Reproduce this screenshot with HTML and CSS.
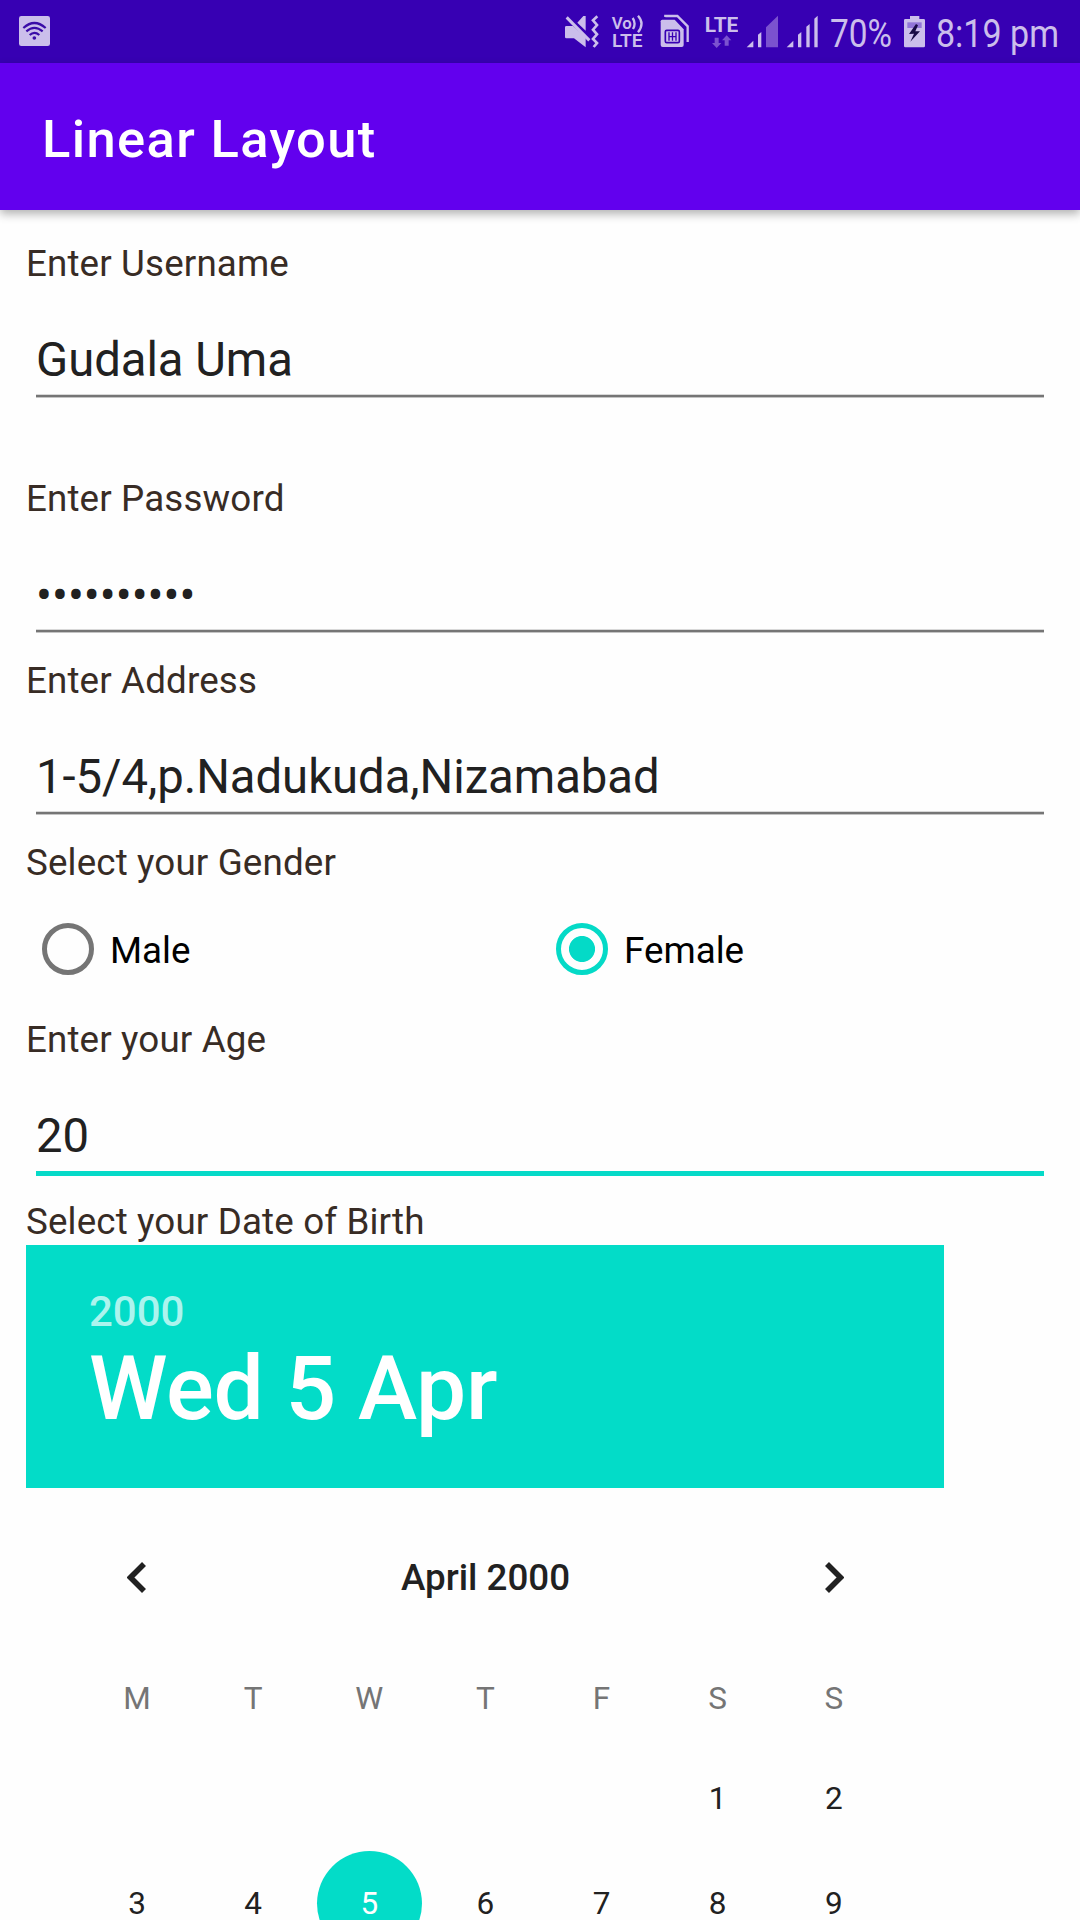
FILE: index.html
```html
<!DOCTYPE html>
<html lang="en">
<head>
<meta charset="utf-8">
<title>Linear Layout</title>
<link rel="stylesheet" href="styles.css">
</head>
<body>
<div class="screen">
  <header class="status-bar">
    <svg class="wifi-badge" width="31" height="63" viewBox="57 0 93 189">
      <rect x="57" y="48" width="93" height="90" rx="7" fill="#cbbeeb"/>
      <g fill="none" stroke="#3a0ca8" stroke-width="6.5">
        <path d="M70 84Q103 54 137 84"/>
        <path d="M79 94Q103 73 128 94"/>
        <path d="M89 105Q103 92 118 105"/>
      </g>
      <circle cx="103" cy="114" r="5.5" fill="#3a0ca8"/>
    </svg>
    <div class="status-icons">
      <svg width="34" height="63" viewBox="75 0 102 189">
        <path d="M79 78H99L137 112V142L102 115H79Q75 115 75 111V82Q75 78 79 78ZM112 68L130 48H137V92Z" fill="#cbbeeb"/>
        <path d="M80 52L148 121" stroke="#cbbeeb" stroke-width="9"/>
        <path d="M172 49L159 61L171 75L159 89L171 103L159 117L171 129L161 141" fill="none" stroke="#cbbeeb" stroke-width="8"/>
      </svg>
      <svg class="volte" width="33" height="63" viewBox="213 0 99 189">
        <text x="215" y="88" font-size="51" textLength="60" lengthAdjust="spacingAndGlyphs">Vo</text>
        <path d="M278 54Q289 70 279 87M294 47Q315 70 294 97" fill="none" stroke="#cbbeeb" stroke-width="7"/>
        <text x="216" y="141" font-size="53" textLength="92" lengthAdjust="spacingAndGlyphs">LTE</text>
      </svg>
      <svg class="sim" width="30" height="63" viewBox="360 0 90 189">
        <path d="M376 51V48H412L443 79V126" fill="none" stroke="#cbbeeb" stroke-width="7"/>
        <path d="M367 59H404L431 88V135Q431 141 425 141H368Q362 141 362 135V64Q362 59 367 59Z" fill="#cbbeeb"/>
        <g fill="none" stroke="#3700b3" stroke-width="5">
          <rect x="376" y="91" width="42" height="37" rx="4"/>
          <path d="M387 97V122M397.500 97V122M408 97V122M387 110H408" stroke-width="4"/>
        </g>
      </svg>
      <svg class="lte" width="33" height="63" viewBox="495 0 99 189">
        <text x="494" y="95" font-size="58" textLength="101" lengthAdjust="spacingAndGlyphs">LTE</text>
        <path d="M524 113H536V129H544L530 144L516 129H524ZM554 137H566V121H574L560 106L546 121H554Z" fill="#7b52cf"/>
      </svg>
      <svg class="signal-one" width="33" height="63" viewBox="618 0 99 189">
        <path d="M620 142L640 122V142ZM654 142V104L664 96V142Z" fill="#cbbeeb"/>
        <path d="M678 142V82L714 47V142Z" fill="#7b52cf"/>
      </svg>
      <svg class="signal-two" width="32" height="63" viewBox="738 0 96 189">
        <path d="M740 142L760 122V142ZM774 142V104L784 96V142ZM799 142V80L809 72V142ZM823 142V56L833 47V142Z" fill="#cbbeeb"/>
      </svg>
      <svg class="percent" width="60" height="63" viewBox="0 0 60 63">
        <text x="-1" y="47" font-size="39" textLength="62" lengthAdjust="spacingAndGlyphs">70%</text>
      </svg>
      <svg class="battery" width="21" height="63" viewBox="312 0 63 189">
        <path d="M330 48H358V57H371Q375 57 375 61V138Q375 142 371 142H316Q312 142 312 138V61Q312 57 316 57H330Z" fill="#cbbeeb"/>
        <path d="M322 67H365V84H322Z" fill="#9275d8"/>
        <path d="M348 72L327 102L342 101L331 125L360 94L346 94L354 76Z" fill="#180a45"/>
      </svg>
      <svg class="clock" width="122" height="63" viewBox="0 0 122 63">
        <text x="-1" y="47" font-size="39" textLength="123" lengthAdjust="spacingAndGlyphs">8:19 pm</text>
      </svg>
    </div>
  </header>
  <h1 class="app-bar">Linear Layout</h1>
  <main class="form">
    <div class="label">Enter Username</div>
    <div class="field spaced"><div class="value">Gudala Uma</div><div class="line"></div></div>
    <div class="label">Enter Password</div>
    <div class="field password"><div class="value">••••••••••</div><div class="line"></div></div>
    <div class="label">Enter Address</div>
    <div class="field"><div class="value">1-5/4,p.Nadukuda,Nizamabad</div><div class="line"></div></div>
    <div class="label">Select your Gender</div>
    <div class="radios">
      <div class="radio"><span class="ring"></span><span class="option">Male</span></div>
      <div class="radio checked"><span class="ring"></span><span class="option">Female</span></div>
    </div>
    <div class="label">Enter your Age</div>
    <div class="field focused"><div class="value">20</div><div class="line"></div></div>
    <div class="label">Select your Date of Birth</div>
    <section class="picker">
      <div class="picker-header">
        <div class="year">2000</div>
        <div class="date">Wed 5 Apr</div>
      </div>
      <div class="month-nav">
        <svg width="19" height="31" viewBox="0 0 19 31"><path d="M17 2L3.500 15.500L17 29" /></svg>
        <span>April 2000</span>
        <svg width="19" height="31" viewBox="0 0 19 31"><path d="M2 2L15.500 15.500L2 29" /></svg>
      </div>
      <div class="grid weekdays">
        <span>M</span><span>T</span><span>W</span><span>T</span><span>F</span><span>S</span><span>S</span>
      </div>
      <div class="grid days">
        <span></span><span></span><span></span><span></span><span></span><span>1</span><span>2</span>
        <span>3</span><span>4</span><span class="selected">5</span><span>6</span><span>7</span><span>8</span><span>9</span>
      </div>
    </section>
  </main>
</div>
</body>
</html>
```
FILE: styles.css
```css
* { box-sizing: border-box; }

body {
  margin: 0;
  background: #fefefe;
  font-family: Roboto, "Liberation Sans", sans-serif;
}

.screen {
  display: flex;
  flex-direction: column;
  width: 1080px;
  height: 1920px;
  overflow: hidden;
}

svg { display: block; flex: none; }

.status-bar {
  display: flex;
  justify-content: space-between;
  flex: none;
  height: 63px;
  padding: 0 21px 0 19px;
  background: #3700b3;
}

.status-icons { display: flex; }
.status-icons text { fill: #cbbeeb; }
.volte { margin-left: 12px; }
.volte text { font-weight: 600; }
.lte text { font-weight: 700; }
.sim { margin-left: 16px; }
.lte { margin-left: 15px; }
.signal-one { margin-left: 8px; }
.signal-two { margin-left: 7px; }
.percent, .battery { margin-left: 13px; }
.clock { margin-left: 12px; overflow: visible; }
.percent { overflow: visible; }

.app-bar {
  flex: none;
  height: 147px;
  margin: 0;
  padding-left: 42px;
  background: #6200ee;
  box-shadow: 0 4px 9px rgba(0, 0, 0, 0.3);
  color: #fff;
  font-size: 52.5px;
  font-weight: 500;
  line-height: 153px;
  letter-spacing: 1.35px;
}

.form {
  display: flex;
  flex-direction: column;
  flex: none;
  padding: 30px 26px 0;
}

.label {
  color: #382c25;
  font-size: 36.75px;
  line-height: 47px;
  letter-spacing: 0.14px;
}

.field { padding: 43px 10px 0; margin-bottom: 24px; }
.field.spaced { margin-bottom: 77px; }
.value {
  color: #212121;
  font-size: 47.25px;
  line-height: 60px;
  letter-spacing: -0.04px;
}
.line {
  height: 4px;
  margin-top: 4px;
  background: linear-gradient(#d8d8d8 1px, #757575 1px 3px, #c4c4c4 3px);
}
.password { padding-top: 44px; }
.password .value { letter-spacing: 0; }
.password .line { margin-top: 3px; }
.focused { margin-bottom: 22px; }
.focused .line {
  height: 5px;
  margin-top: 5px;
  background: #06dac8;
}

.radios {
  display: grid;
  grid-template-columns: 1fr 1fr;
  height: 130px;
  padding-bottom: 4px;
}
.radio {
  display: flex;
  align-items: center;
  gap: 16px;
  padding-left: 16px;
  color: #000;
  font-size: 36.75px;
}
.option { padding-top: 2px; }
.ring {
  width: 52px;
  height: 52px;
  border: 5.25px solid #757575;
  border-radius: 50%;
}
.checked .ring {
  border-color: #04dac7;
  background: radial-gradient(circle, #04dac7 12.6px, transparent 13.4px);
}

.picker { width: 918px; }
.picker-header {
  height: 243px;
  padding: 42px 63px 0;
  background: #03dcc8;
  color: #fff;
  font-weight: 500;
}
.year {
  color: #acf4ee;
  font-size: 42px;
  line-height: 49px;
}
.date {
  font-size: 89.25px;
  line-height: 105px;
  letter-spacing: -0.25px;
}

.month-nav {
  display: flex;
  align-items: center;
  justify-content: space-between;
  height: 179px;
  padding: 0 100px 0 101px;
  color: #212121;
  font-size: 36.75px;
  font-weight: 500;
}
.month-nav path {
  fill: none;
  stroke: #212121;
  stroke-width: 5.6;
}

.grid {
  display: grid;
  grid-template-columns: repeat(7, 116.14px);
  padding-left: 53px;
  color: #212121;
  font-size: 31.5px;
  text-align: center;
}
.weekdays {
  padding-top: 13px;
  padding-bottom: 29px;
  color: #757575;
  line-height: 37px;
}
.days {
  grid-auto-rows: 105px;
  line-height: 105px;
}
.selected {
  width: 105px;
  margin: 0 auto;
  border-radius: 50%;
  background: #03dcc8;
  color: #fff;
}
```
